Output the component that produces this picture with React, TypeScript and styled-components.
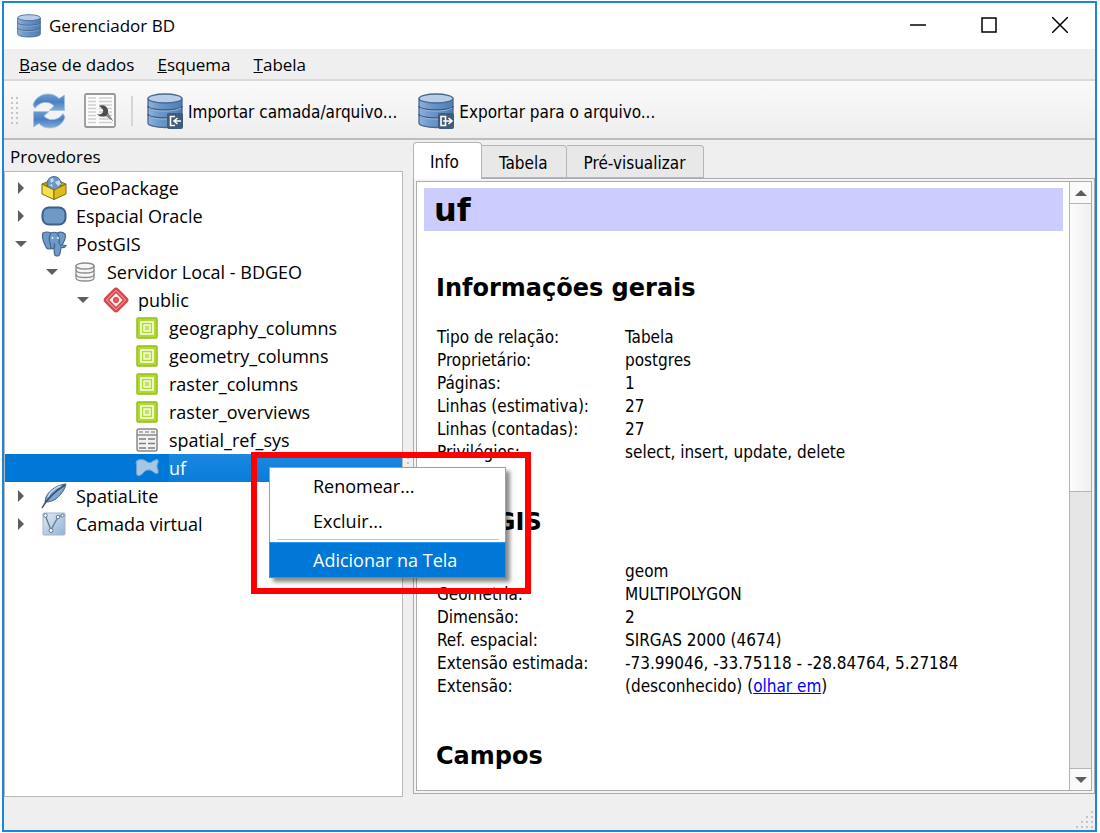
import React from 'react';
import styled, { createGlobalStyle, css } from 'styled-components';

const uiFont = '"Open Sans", "Noto Sans", sans-serif';
const docFont = '"DejaVu Sans Condensed", "DejaVu Sans", sans-serif';
const boldFont = '"DejaVu Sans", sans-serif';

const GlobalStyle = createGlobalStyle`
  *, *::before, *::after { box-sizing: border-box; }
  body { margin: 0; background: #fff; color: #000; }
  button { font: inherit; color: inherit; background: none; border: 0; padding: 0; margin: 0; cursor: default; }
`;

const Desktop = styled.div`
  padding: 1px 3px 1px 2px;
  min-height: 100vh;
  display: flex;
`;

const Window = styled.div`
  flex: 1;
  min-width: 0;
  display: flex;
  flex-direction: column;
  border: 2px solid #1c86dc;
  background: #efefef;
  font: 17px/24px ${uiFont};
`;

const TitleBar = styled.header`
  display: flex;
  align-items: center;
  height: 46px;
  padding-left: 13px;
  gap: 8px;
  background: #fff;
`;

const Title = styled.h1`
  flex: 1;
  margin: 0;
  font-size: 17px;
  font-weight: 400;
`;

const CaptionGroup = styled.div`
  display: flex;
  align-self: flex-start;
`;

const CaptionButton = styled.button`
  width: 71px;
  height: 44px;
  display: grid;
  place-items: center;
`;

const MenuBar = styled.nav`
  display: flex;
  gap: 23px;
  height: 32px;
  padding: 2px 15px 0;
  border-bottom: 2px solid #dadada;
  align-items: center;
`;

const MenuTitle = styled.button`
  &::first-letter { text-decoration: underline; }
`;

const Toolbar = styled.div`
  display: flex;
  align-items: center;
  height: 59px;
  padding: 2px 0 0 7px;
  border-bottom: 2px solid #bdbdbd;
  background: linear-gradient(#fafafa, #eeeeee);
  font: 17px/24px ${docFont};
`;

const ToolButton = styled.button<{ $gap: number }>`
  display: flex;
  align-items: center;
  gap: 5px;
  margin-left: ${p => p.$gap}px;
  white-space: nowrap;
`;

const ToolLabel = styled.span`
  padding-top: 3px;
`;

const ToolSeparator = styled.div`
  width: 2px;
  height: 30px;
  margin-left: 15px;
  background: #d6d6d6;
`;

const Body = styled.main`
  flex: 1;
  display: flex;
  min-height: 0;
`;

const Providers = styled.section`
  flex: 0 0 399px;
  display: flex;
  flex-direction: column;
`;

const PanelTitle = styled.h2`
  margin: 0;
  padding: 5px 6px 2px;
  height: 31px;
  font-size: 17px;
  font-weight: 400;
`;

const Tree = styled.ul`
  flex: 1;
  list-style: none;
  margin: 0;
  padding: 2px 0;
  border: 1px solid #b9b9b9;
  background: #fff;
  font-size: 18px;
`;

const TreeRow = styled.li<{ $level: number; $selected?: boolean }>`
  position: relative;
  display: flex;
  align-items: center;
  height: 28px;
  padding-left: ${p => p.$level * 31}px;
  ${p => p.$selected && css`
    background: #0078d7;
    color: #fff;
  `}
`;

const Expander = styled.span`
  width: 31px;
  display: grid;
  place-items: center;
`;

const NodeIcon = styled.span`
  width: 26px;
  margin: 0 9px 0 5px;
  display: grid;
  place-items: center;
`;

const NodeName = styled.span<{ $selected?: boolean }>`
  line-height: 28px;
  ${p => p.$selected && css`
    flex: 1;
    background: linear-gradient(#1a88e0, #0a7cd9);
  `}
`;

const Callout = styled.div`
  position: absolute;
  z-index: 2;
  top: -2px;
  left: 246px;
  width: 280px;
  height: 142px;
  border: 6px solid #fe0000;
  padding: 9px 12px;
`;

const ContextMenu = styled.div`
  width: 237px;
  display: flex;
  flex-direction: column;
  border: 1px solid #a0a0a0;
  background: #fff;
  color: #000;
  box-shadow: 4px 4px 4px rgba(0, 0, 0, 0.45);
`;

const MenuItem = styled.button<{ $active?: boolean }>`
  height: 35px;
  padding-left: 43px;
  text-align: left;
  ${p => p.$active && css`
    margin: 0 -1px -1px;
    height: 36px;
    border: 1px solid #2a96ee;
    background: #0078d7;
    color: #fff;
  `}
`;

const MenuRule = styled.hr`
  width: 222px;
  margin: 1px 7px 2px;
  border: 0;
  border-top: 1px solid #c6c6c6;
`;

const Splitter = styled.div`
  width: 10px;
  display: grid;
  place-items: center;
`;

const Details = styled.section`
  flex: 1;
  min-width: 0;
  display: flex;
  flex-direction: column;
  padding: 2px 0 3px;
  font: 17px/23px ${docFont};
`;

const Tabs = styled.div`
  display: flex;
  align-items: flex-end;
  height: 36px;
`;

const Tab = styled.button<{ $active?: boolean }>`
  height: 33px;
  padding: 4px 18px 0 17px;
  border: 1px solid #b4b4b4;
  border-left-width: 0;
  border-radius: 0 4px 0 0;
  background: #e8e8e8;
  ${p => p.$active && css`
    position: relative;
    z-index: 1;
    height: 37px;
    margin-bottom: -1px;
    padding: 2px 22px 0 16px;
    border-left-width: 1px;
    border-bottom: 0;
    border-radius: 4px 4px 0 0;
    background: #fff;
  `}
`;

const Pane = styled.div`
  flex: 1;
  min-height: 0;
  display: flex;
  padding: 2px;
  border: 1px solid #ababab;
  background: #f4f4f4;
`;

const Viewport = styled.div`
  flex: 1;
  display: flex;
  min-width: 0;
  border: 1px solid #ababab;
  background: #fff;
`;

const Document = styled.article`
  flex: 1;
  min-width: 0;
  padding: 6px 6px 0 7px;
`;

const Banner = styled.h2`
  margin: 0;
  padding: 1px 10px 0;
  background: #ccccff;
  font: 700 32px/42px ${boldFont};
`;

const Heading = styled.h3`
  margin: 0;
  padding-left: 12px;
  font: 700 24px/32px ${boldFont};
`;

const Group = styled.section<{ $top: number }>`
  margin-top: ${p => p.$top}px;
`;

const Facts = styled.table`
  margin: 22px 0 0 13px;
  border-collapse: collapse;
  th, td { padding: 0; height: 23px; font-weight: 400; text-align: left; white-space: nowrap; }
  th { width: 188px; }
`;

const Link = styled.a`
  color: #0000ff;
`;

const ScrollBar = styled.div`
  width: 22px;
  display: flex;
  flex-direction: column;
  border-left: 1px solid #b4b4b4;
  background: #e6e6e6;
`;

const ScrollButton = styled.button`
  height: 22px;
  display: grid;
  place-items: center;
  background: #fafafa;
  border: 0 solid #b4b4b4;
  &:first-child { border-bottom-width: 1px; }
  &:last-child { border-top-width: 1px; }
`;

const ScrollTrack = styled.div`
  flex: 1;
`;

const ScrollThumb = styled.div`
  height: 51%;
  border-bottom: 1px solid #b4b4b4;
  background: linear-gradient(90deg, #fcfcfc, #f0f0f0);
`;

const StatusBar = styled.footer`
  display: flex;
  justify-content: flex-end;
  align-items: flex-end;
  height: 33px;
  padding: 0 2px 2px;
`;

const DatabaseIcon = ({ size, arrow }: { size: number; arrow?: 'in' | 'out' }) => (
  <svg width={size} height={size} viewBox="0 0 36 36">
    <defs>
      <linearGradient id="dbBody" x1="0" x2="1">
        <stop offset="0" stopColor="#8fb2dc" />
        <stop offset="0.3" stopColor="#6f9acb" />
        <stop offset="1" stopColor="#4c7cb5" />
      </linearGradient>
    </defs>
    <path d="M1 6v24c0 2.600 7.500 4.500 17 4.500s17-1.900 17-4.500V6z" fill="url(#dbBody)" stroke="#4a688c" strokeWidth="1.300" />
    <path d="M1 13c0 2.500 7.500 4 17 4s17-1.500 17-4M1 21c0 2.500 7.500 4 17 4s17-1.500 17-4" fill="none" stroke="#3a5878" strokeWidth="1.500" />
    <path d="M2 14.800c2 2 8 3.200 16 3.200s14-1.200 16-3.200M2 22.800c2 2 8 3.200 16 3.200s14-1.200 16-3.200" fill="none" stroke="#9dbde2" strokeWidth="1" />
    <ellipse cx="18" cy="5.500" rx="17" ry="4.500" fill="#b7cde8" stroke="#4a688c" strokeWidth="1.300" />
    {arrow && (
      <g>
        <rect x="20" y="20" width="16" height="16" rx="2" fill="#3f5c78" />
        {arrow === 'in' ? (
          <path d="M28 23.500h-4.500v9H28M34 28h-6M30.500 25l-3.500 3 3.500 3" fill="none" stroke="#fff" strokeWidth="1.600" />
        ) : (
          <path d="M27.500 23.500H23v9h4.500zM25 28h8.500M30.500 25l3.500 3-3.500 3" fill="none" stroke="#fff" strokeWidth="1.600" />
        )}
      </g>
    )}
  </svg>
);

const RefreshIcon = () => (
  <svg width="34" height="36" viewBox="0 0 34 36">
    <defs>
      <linearGradient id="refreshFill" x2="0" y2="1">
        <stop offset="0" stopColor="#6a9bd3" />
        <stop offset="0.5" stopColor="#4a80c2" />
        <stop offset="1" stopColor="#82aedf" />
      </linearGradient>
    </defs>
    <path d="M1 12C3 5 9 1 16 1c5 0 8 1.500 11 4.500L32.500 2v15.500H17l5-4.500c-3-3-6-4-10-3.500-4 .500-7 3-9 6z" fill="url(#refreshFill)" stroke="#a3c1e5" strokeWidth="0.800" />
    <path d="M33 24c-2 7-8 11-15 11-5 0-8-1.500-11-4.500L1.500 34V18.500H17l-5 4.500c3 3 6 4 10 3.500 4-.500 7-3 9-6z" fill="url(#refreshFill)" stroke="#a3c1e5" strokeWidth="0.800" />
  </svg>
);

const SqlWindowIcon = () => (
  <svg width="32" height="36" viewBox="0 0 32 36">
    <rect x="1" y="1" width="30" height="33" rx="1.500" fill="#fbfbfb" stroke="#989898" strokeWidth="1.800" />
    <path d="M4 5h8M4 8.500h8M4 12h8M4 15.500h8M4 19h8M4 22.500h8M4 26h8M4 29.500h8M15 5h13M15 8.500h13M15 12h13M15 15.500h13M15 19h13M15 22.500h13M15 26h13M15 29.500h13" stroke="#cfcfcf" strokeWidth="1.600" />
    <path d="M15 13c4-2 8 0 9 4v3l5 8-7-5c-3 1-7 1-9-2 3 1 5 0 6-2s-1-4-4-6z" fill="#4c4c4c" />
    <path d="M24 20l5 8-7-5z" fill="#8d8d8d" />
  </svg>
);

const Triangle = ({ dir }: { dir: 'right' | 'down' | 'up' }) => {
  const d = { right: 'M3 0v12l6-6z', down: 'M0 3h12L6 9z', up: 'M0 9h12L6 3z' }[dir];
  return (
    <svg width="12" height="12" viewBox="0 0 12 12">
      <path d={d} fill="#5e5e5e" />
    </svg>
  );
};

const GeoPackageIcon = () => (
  <svg width="26" height="24" viewBox="0 0 26 24">
    <path d="M1 8l5-2h14l5 2-12 6z" fill="#c9a90f" stroke="#7d6b14" />
    <circle cx="13" cy="7.500" r="7" fill="#6d94c3" stroke="#4a6a90" />
    <path d="M9 3l3-1 1 3-3 2zM14 6l4-2 2 4-3 2zM8 9l3-1 1 3z" fill="#c3d9f0" />
    <path d="M1 8l12 6v9.500L1 18z" fill="#f7e04a" stroke="#7d6b14" />
    <path d="M25 8l-12 6v9.500L25 18z" fill="#dcbd1c" stroke="#7d6b14" />
  </svg>
);

const OracleIcon = () => (
  <svg width="26" height="20" viewBox="0 0 26 20">
    <rect x="1.500" y="1.500" width="23" height="17" rx="6.500" fill="#7099c8" stroke="#3f5f86" strokeWidth="2" />
  </svg>
);

const PostgisIcon = () => (
  <svg width="26" height="26" viewBox="0 0 26 26">
    <path d="M2 2c3-1.500 6-1 8 0 2-1 4-1 6 0 3-1.500 6-1 8 1 1 3-1 8-3 11l4 .500c-1 2-3 2.500-5 2-.500 3-.500 6-2 8-2 1-4 .500-4.500-1.500L13 17c-1 1-2 1-3 .500-2 1-4 .500-5-1.500C3 12 0 6 2 2z" fill="#6f99c9" stroke="#44658c" strokeWidth="1.200" />
    <path d="M10 2C8 5 8 9 9 12c1 2 1 4 1 5.500M16 2c2 3 3 6 2 10l2 3M13 17c1-2 1-3 0-5" fill="none" stroke="#44658c" strokeWidth="1.200" />
    <circle cx="11.500" cy="7" r="0.900" fill="#fff" />
    <circle cx="17" cy="7" r="0.900" fill="#fff" />
  </svg>
);

const ConnectionIcon = () => (
  <svg width="20" height="20" viewBox="0 0 20 20" fill="#f6f6f6" stroke="#8b8b8b" strokeWidth="1.300">
    <path d="M1 4v12c0 2 4 3 9 3s9-1 9-3V4z" />
    <path d="M1 8c0 2 4 3 9 3s9-1 9-3M1 12.500c0 2 4 3 9 3s9-1 9-3" fill="none" />
    <ellipse cx="10" cy="4" rx="9" ry="3" />
  </svg>
);

const SchemaIcon = () => (
  <svg width="26" height="26" viewBox="0 0 26 26" fill="none" stroke="#d8474b">
    <rect x="4.500" y="4.500" width="17" height="17" rx="2" transform="rotate(45 13 13)" fill="#f29a9c" strokeWidth="2.400" />
    <rect x="7.500" y="7.500" width="11" height="11" transform="rotate(45 13 13)" fill="#fdf1f1" strokeWidth="1.600" />
    <circle cx="13" cy="13" r="2.200" fill="#e46a6d" strokeWidth="1.600" />
  </svg>
);

const LayerIcon = () => (
  <svg width="22" height="22" viewBox="0 0 22 22">
    <rect x="1" y="1" width="20" height="20" rx="1" fill="#b1da2e" stroke="#94c01c" strokeWidth="1.500" />
    <rect x="5" y="5" width="12" height="12" fill="none" stroke="#fff" strokeWidth="1.500" />
    <rect x="8" y="8" width="6" height="6" fill="#c5e45c" stroke="#fff" strokeWidth="1.300" />
  </svg>
);

const TableIcon = () => (
  <svg width="22" height="24" viewBox="0 0 22 24">
    <rect x="1" y="1" width="20" height="22" rx="2" fill="#f2f2f2" stroke="#8a8a8a" strokeWidth="1.500" />
    <path d="M1 7h20" stroke="#8a8a8a" strokeWidth="1.500" />
    <path d="M3 4h4M9 4h4M15 4h4" stroke="#9a9a9a" strokeWidth="1.300" />
    <path d="M3 11h7M12 11h7M3 15.500h7M12 15.500h7M3 20h7M12 20h7" stroke="#808080" strokeWidth="1.600" />
  </svg>
);

const PolygonIcon = () => (
  <svg width="24" height="18" viewBox="0 0 24 18">
    <path d="M1 3C2 0 8 0 11 2c2 2 5 2 7 0 2-1 4-2 5-1 1 2-1 4-1 6s2 5 1 7c-2 2-4-1-6-2-3-2-6-1-8 1-2 3-6 5-7 3-1-3 0-9-1-13z" fill="#a5c6e6" stroke="#6f9fce" />
  </svg>
);

const FeatherIcon = () => (
  <svg width="26" height="26" viewBox="0 0 26 26">
    <path d="M25 1C17 2 9 6 5 14l-1 5c6 0 11-2 15-7 3-3 5-7 6-11z" fill="#7fa6d3" stroke="#3f5f86" />
    <path d="M24 2C14 8 6 16 1 25" fill="none" stroke="#33506f" strokeWidth="1.500" />
    <path d="M20 3C14 5 9 9 7 14" fill="none" stroke="#c3d9f0" strokeWidth="1.500" />
  </svg>
);

const VirtualIcon = () => (
  <svg width="24" height="24" viewBox="0 0 24 24">
    <defs>
      <linearGradient id="virtualFill" x2="1" y2="1">
        <stop offset="0" stopColor="#e3ecf6" />
        <stop offset="1" stopColor="#8fb1d6" />
      </linearGradient>
    </defs>
    <rect x="1" y="1" width="22" height="22" rx="1" fill="url(#virtualFill)" stroke="#a3b4c8" />
    <path d="M3 3l6 15L16 5l5-2" fill="none" stroke="#62788f" strokeWidth="1.300" />
    <g fill="#fff" stroke="#62788f">
      <circle cx="3.500" cy="3.500" r="1.800" />
      <circle cx="9" cy="18.500" r="2" />
      <circle cx="16" cy="5" r="1.800" />
      <circle cx="20.500" cy="3.500" r="1.500" />
    </g>
  </svg>
);

const Dots = ({ points, width, height }: { points: [number, number][]; width: number; height: number }) => (
  <svg width={width} height={height} fill="#c4c4c4">
    {points.map(([x, y]) => (
      <rect key={`${x}-${y}`} x={x} y={y} width="2" height="2" />
    ))}
  </svg>
);

const gripPoints = [0, 1, 2, 3].flatMap(r =>
  Array.from({ length: r + 1 }, (_, c): [number, number] => [15 - c * 5, r * 5]),
);
const handlePoints = [0, 1, 2, 3, 4, 5].flatMap((r): [number, number][] => [[0, r * 5], [5, r * 5]]);
const splitterPoints = [0, 1, 2, 3, 4].map((r): [number, number] => [0, r * 5]);

type Node = { name: string; level: number; open?: boolean; icon: React.ReactNode; selected?: boolean };

const nodes: Node[] = [
  { name: 'GeoPackage', level: 0, open: false, icon: <GeoPackageIcon /> },
  { name: 'Espacial Oracle', level: 0, open: false, icon: <OracleIcon /> },
  { name: 'PostGIS', level: 0, open: true, icon: <PostgisIcon /> },
  { name: 'Servidor Local - BDGEO', level: 1, open: true, icon: <ConnectionIcon /> },
  { name: 'public', level: 2, open: true, icon: <SchemaIcon /> },
  { name: 'geography_columns', level: 3, icon: <LayerIcon /> },
  { name: 'geometry_columns', level: 3, icon: <LayerIcon /> },
  { name: 'raster_columns', level: 3, icon: <LayerIcon /> },
  { name: 'raster_overviews', level: 3, icon: <LayerIcon /> },
  { name: 'spatial_ref_sys', level: 3, icon: <TableIcon /> },
  { name: 'uf', level: 3, icon: <PolygonIcon />, selected: true },
  { name: 'SpatiaLite', level: 0, open: false, icon: <FeatherIcon /> },
  { name: 'Camada virtual', level: 0, open: false, icon: <VirtualIcon /> },
];

const general: [string, React.ReactNode][] = [
  ['Tipo de relação:', 'Tabela'],
  ['Proprietário:', 'postgres'],
  ['Páginas:', '1'],
  ['Linhas (estimativa):', '27'],
  ['Linhas (contadas):', '27'],
  ['Privilégios:', 'select, insert, update, delete'],
];

const postgis: [string, React.ReactNode][] = [
  ['', 'geom'],
  ['Geometria:', 'MULTIPOLYGON'],
  ['Dimensão:', '2'],
  ['Ref. espacial:', 'SIRGAS 2000 (4674)'],
  ['Extensão estimada:', '-73.99046, -33.75118 - -28.84764, 5.27184'],
  ['Extensão:', <>(desconhecido) (<Link href="#extent">olhar em</Link>)</>],
];

const FactTable = ({ rows }: { rows: [string, React.ReactNode][] }) => (
  <Facts>
    <tbody>
      {rows.map(([label, value]) => (
        <tr key={label}>
          <th scope="row">{label}</th>
          <td>{value}</td>
        </tr>
      ))}
    </tbody>
  </Facts>
);

const RowMenu = () => (
  <Callout>
    <ContextMenu role="menu">
      <MenuItem role="menuitem">Renomear...</MenuItem>
      <MenuItem role="menuitem">Excluir...</MenuItem>
      <MenuRule />
      <MenuItem role="menuitem" $active>Adicionar na Tela</MenuItem>
    </ContextMenu>
  </Callout>
);

const CaptionButtons = () => (
  <CaptionGroup>
    <CaptionButton aria-label="Minimizar">
      <svg width="16" height="16" fill="none" stroke="#000" strokeWidth="1.500"><path d="M0 8h16" /></svg>
    </CaptionButton>
    <CaptionButton aria-label="Maximizar">
      <svg width="16" height="16" fill="none" stroke="#000" strokeWidth="1.500"><path d="M1 1h14v14H1z" /></svg>
    </CaptionButton>
    <CaptionButton aria-label="Fechar">
      <svg width="16" height="16" fill="none" stroke="#000" strokeWidth="1.500"><path d="M0 0l16 16M16 0L0 16" /></svg>
    </CaptionButton>
  </CaptionGroup>
);

export default function App() {
  return (
    <Desktop>
      <GlobalStyle />
      <Window>
        <TitleBar>
          <DatabaseIcon size={24} />
          <Title>Gerenciador BD</Title>
          <CaptionButtons />
        </TitleBar>
        <MenuBar>
          <MenuTitle>Base de dados</MenuTitle>
          <MenuTitle>Esquema</MenuTitle>
          <MenuTitle>Tabela</MenuTitle>
        </MenuBar>
        <Toolbar>
          <Dots points={handlePoints} width={8} height={28} />
          <ToolButton $gap={13} aria-label="Atualizar"><RefreshIcon /></ToolButton>
          <ToolButton $gap={18} aria-label="Janela SQL"><SqlWindowIcon /></ToolButton>
          <ToolSeparator />
          <ToolButton $gap={14}><DatabaseIcon size={36} arrow="in" /><ToolLabel>Importar camada/arquivo...</ToolLabel></ToolButton>
          <ToolButton $gap={21}><DatabaseIcon size={36} arrow="out" /><ToolLabel>Exportar para o arquivo...</ToolLabel></ToolButton>
        </Toolbar>
        <Body>
          <Providers>
            <PanelTitle>Provedores</PanelTitle>
            <Tree role="tree">
              {nodes.map(n => (
                <TreeRow key={n.name} role="treeitem" aria-expanded={n.open} aria-selected={!!n.selected} $level={n.level} $selected={n.selected}>
                  <Expander>{n.open !== undefined && <Triangle dir={n.open ? 'down' : 'right'} />}</Expander>
                  <NodeIcon>{n.icon}</NodeIcon>
                  <NodeName $selected={n.selected}>{n.name}</NodeName>
                  {n.selected && <RowMenu />}
                </TreeRow>
              ))}
            </Tree>
          </Providers>
          <Splitter><Dots points={splitterPoints} width={2} height={24} /></Splitter>
          <Details>
            <Tabs role="tablist">
              <Tab role="tab" aria-selected $active>Info</Tab>
              <Tab role="tab">Tabela</Tab>
              <Tab role="tab">Pré-visualizar</Tab>
            </Tabs>
            <Pane>
              <Viewport>
                <Document>
                  <Banner>uf</Banner>
                  <Group $top={41}>
                    <Heading>Informações gerais</Heading>
                    <FactTable rows={general} />
                  </Group>
                  <Group $top={42}>
                    <Heading>PostGIS</Heading>
                    <FactTable rows={postgis} />
                  </Group>
                  <Group $top={42}>
                    <Heading>Campos</Heading>
                  </Group>
                </Document>
                <ScrollBar>
                  <ScrollButton aria-label="Rolar para cima"><Triangle dir="up" /></ScrollButton>
                  <ScrollTrack><ScrollThumb /></ScrollTrack>
                  <ScrollButton aria-label="Rolar para baixo"><Triangle dir="down" /></ScrollButton>
                </ScrollBar>
              </Viewport>
            </Pane>
          </Details>
        </Body>
        <StatusBar><Dots points={gripPoints} width={17} height={17} /></StatusBar>
      </Window>
    </Desktop>
  );
}
